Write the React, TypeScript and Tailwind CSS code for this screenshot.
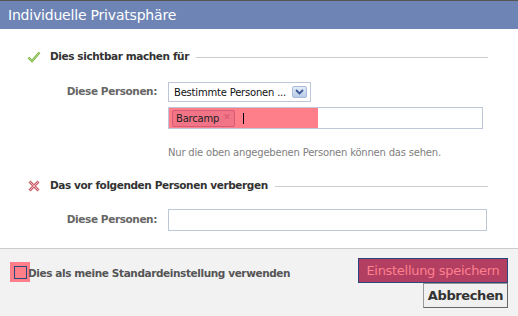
export default function App() {
  return (
    <div
      className="w-[518px] h-[316px] flex flex-col bg-white overflow-hidden text-[10px]"
      style={{ fontFamily: "'DejaVu Sans', Tahoma, sans-serif" }}
    >
      {/* Title bar */}
      <div className="border-t border-[#555] h-[29px] bg-[#6d84b4] flex items-center px-2 text-white text-[14px] tracking-[-0.2px]">
        Individuelle Privatsphäre
      </div>

      {/* Body */}
      <div className="h-[219px] flex flex-col">
        {/* Section 1 header */}
        <div className="mt-[21px] h-[14px] flex items-center pl-[27px] pr-[30px]">
          <svg width="14" height="12" viewBox="0 0 14 12" className="shrink-0">
            <path d="M1.5 6.5 L5 10 L12.5 1.5" fill="none" stroke="#7cb342" strokeWidth="2.4" />
            <path d="M1.5 6.5 L5 10 L12.5 1.5" fill="none" stroke="#b7e08a" strokeWidth="0.9" />
          </svg>
          <span className="ml-[9px] font-bold text-[10.5px] text-[#333] tracking-[-0.4px]">Dies sichtbar machen für</span>
          <div className="flex-1 ml-[7px] h-px bg-[#ccc]" />
        </div>

        {/* Select row */}
        <div className="mt-[18px] flex items-center">
          <div className="w-[157px] text-right font-bold text-[10.5px] text-[#666] tracking-[-0.4px]">Diese Personen:</div>
          <div className="ml-[11px] w-[143px] h-[20px] border border-[#bdc7d8] flex items-center pl-[5px] pr-[3px] text-[#111] tracking-[-0.2px]">
            <span className="flex-1 whitespace-nowrap">Bestimmte Personen ...</span>
            <div className="w-[15px] h-[12px] rounded-[2px] bg-gradient-to-b from-[#e3ebf7] to-[#b9cbe8] border border-[#a9bbd9] flex items-center justify-center">
              <svg width="9" height="6" viewBox="0 0 9 6">
                <path d="M1 1 L4.5 4.5 L8 1" fill="none" stroke="#3b5998" strokeWidth="1.8" />
              </svg>
            </div>
          </div>
        </div>

        {/* Token input */}
        <div className="mt-[5px] ml-[168px] w-[315px] h-[22px] border border-[#bdc7d8] flex">
          <div className="w-[149px] h-full bg-[#fe7f89] flex items-center pl-[3px]">
            <div className="h-[17px] px-[3px] flex items-center border border-[#d65b77] bg-[#f27487] rounded-[2px] text-[#222] tracking-[-0.2px]">
              Barcamp
              <span className="ml-[4px] text-[#d8566f] text-[9px] font-bold">✕</span>
            </div>
            <div className="ml-[8px] w-px h-[11px] bg-black" />
          </div>
        </div>

        {/* Hint */}
        <div className="mt-[16px] ml-[168px] text-[#808080] tracking-[-0.2px]">
          Nur die oben angegebenen Personen können das sehen.
        </div>

        {/* Section 2 header */}
        <div className="mt-[19px] h-[14px] flex items-center pl-[28px] pr-[30px]">
          <svg width="12" height="12" viewBox="0 0 12 12" className="shrink-0">
            <path d="M1.5 1.5 L10.5 10.5 M10.5 1.5 L1.5 10.5" stroke="#c9646e" strokeWidth="3" />
            <path d="M1.5 1.5 L10.5 10.5 M10.5 1.5 L1.5 10.5" stroke="#f0b6bb" strokeWidth="1" />
          </svg>
          <span className="ml-[10px] font-bold text-[10.5px] text-[#333] tracking-[-0.4px]">Das vor folgenden Personen verbergen</span>
          <div className="flex-1 ml-[7px] h-px bg-[#ccc]" />
        </div>

        {/* Input row 2 */}
        <div className="mt-[16px] flex items-center">
          <div className="w-[157px] text-right font-bold text-[10.5px] text-[#666] tracking-[-0.4px]">Diese Personen:</div>
          <div className="ml-[11px] w-[319px] h-[22px] border border-[#bdc7d8]" />
        </div>
      </div>

      {/* Footer */}
      <div className="flex-1 border-t border-[#ccc] bg-[#f2f2f2] flex justify-between items-start pl-[10px] pr-[10px] pt-[9px]">
        <div className="mt-[4px] flex items-start">
          <div className="w-[20px] h-[20px] bg-[#fe7f89] flex items-center justify-center">
            <div className="w-[13px] h-[13px] border border-[#2c4a7e]" />
          </div>
          <span className="-ml-[2px] mt-[4px] font-bold text-[10.5px] text-[#555] tracking-[-0.4px]">Dies als meine Standardeinstellung verwenden</span>
        </div>
        <div className="flex flex-col items-end">
          <button className="w-[150px] h-[25px] bg-[#b23f61] border border-[#29447e] text-[#ff7f8f] text-[13px] tracking-[-0.3px] flex items-center justify-center">
            Einstellung speichern
          </button>
          <button className="w-[85px] h-[25px] bg-[#f0f0f0] border border-[#999] border-b-[#666] border-r-[#666] text-[#333] font-bold text-[13px] tracking-[-0.4px] flex items-center justify-center">
            Abbrechen
          </button>
        </div>
      </div>
    </div>
  );
}
